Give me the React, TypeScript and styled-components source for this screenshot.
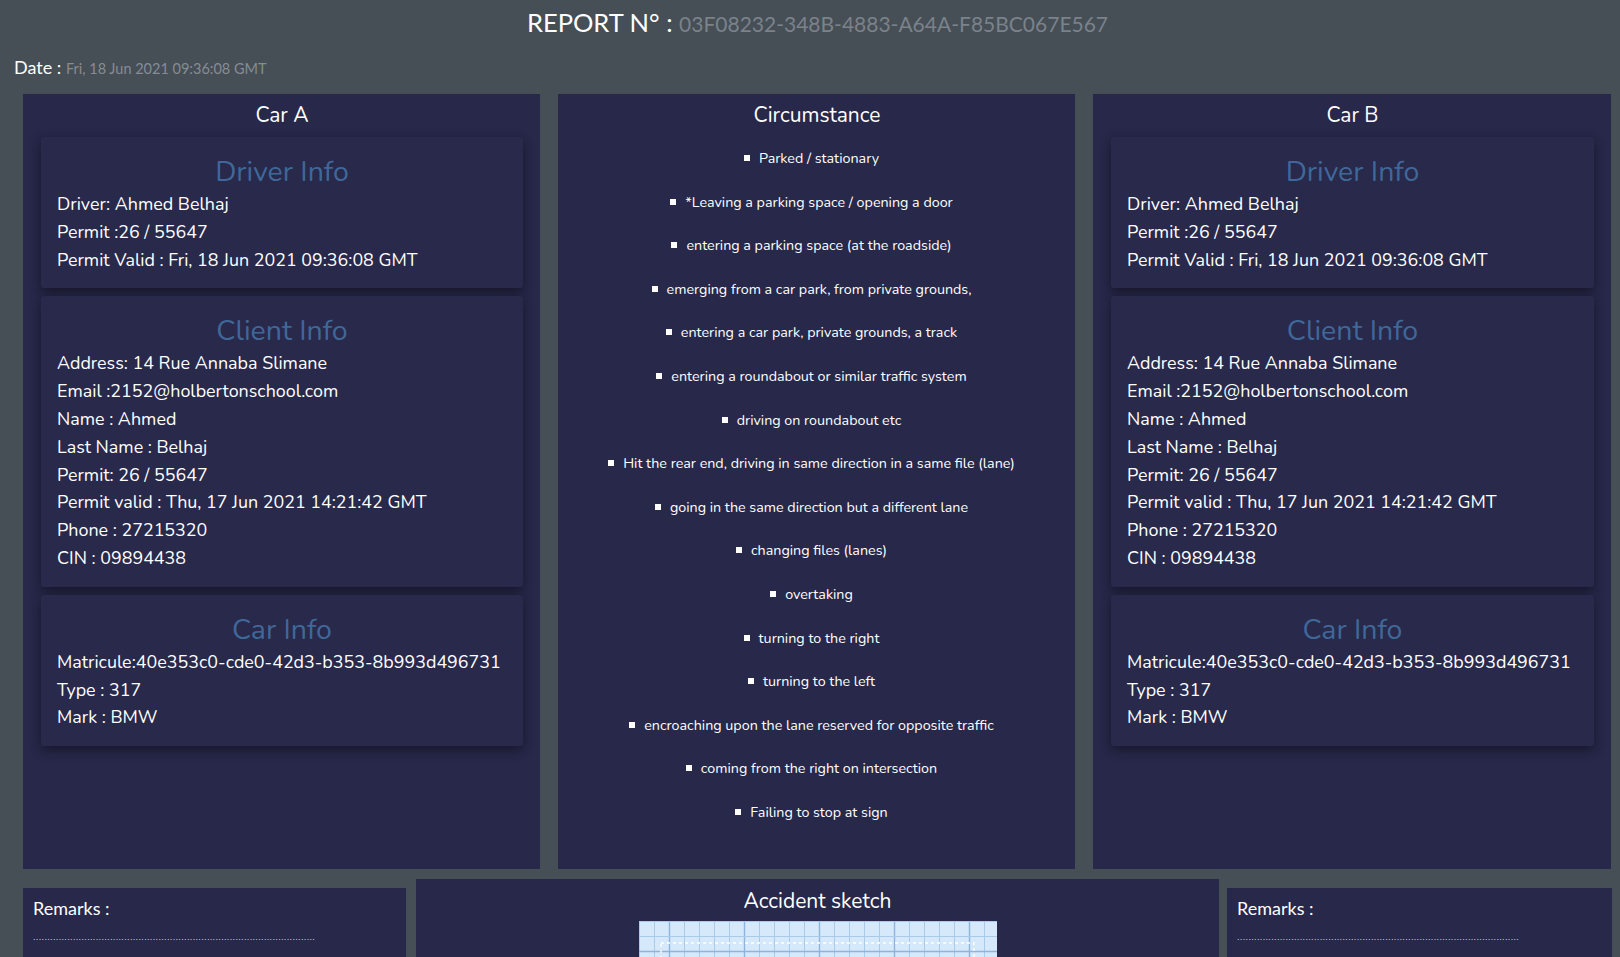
import React from "react";
import styled, { createGlobalStyle } from "styled-components";

const GlobalStyle = createGlobalStyle`
  html, body { margin: 0; padding: 0; }
  body {
    background: #464e56;
    font-family: "Nunito", Lato, "Noto Sans", sans-serif;
    color: #ffffff;
    overflow: hidden;
  }
  * { box-sizing: border-box; }
`;

const Page = styled.div`
  width: 1620px;
  height: 957px;
  overflow: hidden;
`;

const Header = styled.h1`
  margin: 0;
  padding: 5px 0 0 15px;
  height: 44px;
  text-align: center;
  font-family: Lato, "Noto Sans", sans-serif;
  font-weight: 400;
  font-size: 25.5px;
  line-height: 34px;
  color: #ffffff;
`;

const ReportId = styled.span`
  font-size: 21px;
  color: #7b828a;
`;

const DateRow = styled.div`
  padding-left: 14px;
  margin-top: 11px;
  height: 24px;
  font-family: Lato, "Noto Sans", sans-serif;
  font-size: 18px;
  line-height: 24px;
`;

const DateValue = styled.span`
  font-size: 14.5px;
  color: #868c93;
`;

const Columns = styled.div`
  display: grid;
  grid-template-columns: 517px 517px 518px;
  column-gap: 18px;
  padding-left: 23px;
  margin-top: 15px;
`;

const Panel = styled.section`
  background: #27284a;
  height: 775px;
  padding: 8px 17px 0 18px;
`;

const PanelTitle = styled.h2`
  margin: 0 0 9px;
  text-align: center;
  font-weight: 400;
  font-size: 21px;
  line-height: 26px;
`;

const Card = styled.div`
  background: #28294b;
  border-radius: 3px;
  box-shadow: 0 4px 12px rgba(0, 0, 0, 0.45);
  padding: 18px 16px 14px;
  & + & {
    margin-top: 8px;
  }
`;

const CardTitle = styled.h3`
  margin: 0 0 2px;
  text-align: center;
  font-weight: 400;
  font-size: 28.5px;
  line-height: 34px;
  color: #3f6899;
`;

const Line = styled.div`
  font-size: 17.9px;
  line-height: 27.8px;
  white-space: nowrap;
`;

const List = styled.ul`
  list-style: none;
  margin: 6px 0 0;
  padding: 0 11px 0 0;
`;

const Item = styled.li`
  text-align: center;
  font-size: 14.3px;
  line-height: 43.6px;
  white-space: nowrap;
  &::before {
    content: "";
    display: inline-block;
    width: 6px;
    height: 6px;
    background: #ffffff;
    margin-right: 9px;
    vertical-align: 2px;
  }
`;

const BottomRow = styled.div`
  display: flex;
  align-items: flex-start;
  padding-left: 23px;
  margin-top: 10px;
`;

const RemarksBox = styled.div<{ $w: number; $ml: number }>`
  width: ${(p) => p.$w}px;
  margin-left: ${(p) => p.$ml}px;
  margin-top: 9px;
  height: 80px;
  background: #27284a;
  padding: 8px 10px;
`;

const RemarksLabel = styled.div`
  font-family: Lato, "Noto Sans", sans-serif;
  font-size: 18px;
  line-height: 24px;
`;

const Dots = styled.div`
  margin-top: 12px;
  font-family: "Liberation Sans", sans-serif;
  font-size: 9px;
  line-height: 10px;
  letter-spacing: 0.35px;
  color: #d8d8e0;
  white-space: nowrap;
`;

const SketchBox = styled.div`
  width: 803px;
  margin-left: 10px;
  height: 120px;
  background: #27284a;
  display: flex;
  flex-direction: column;
  align-items: center;
  padding-top: 9px;
`;

const SketchTitle = styled.div`
  font-size: 21px;
  line-height: 26px;
  margin-bottom: 7px;
`;

const GridWrap = styled.div`
  width: 358px;
  height: 200px;
  background: #d5e9fb;
`;

const SketchGrid = () => {
  const cell = 15;
  const w = 358;
  const h = 200;
  const v: React.ReactNode[] = [];
  for (let i = 0; i * cell <= w; i++) {
    const major = i % 5 === 2;
    v.push(
      <line key={"v" + i} x1={i * cell + 0.5} y1={0} x2={i * cell + 0.5} y2={h} stroke={major ? "#8db4da" : "#a9cbe9"} strokeWidth={major ? 1.4 : 1} />
    );
  }
  for (let j = 0; j * cell <= h; j++) {
    const major = j % 5 === 2;
    v.push(
      <line key={"h" + j} x1={0} y1={j * cell + 0.5} x2={w} y2={j * cell + 0.5} stroke={major ? "#8db4da" : "#a9cbe9"} strokeWidth={major ? 1.6 : 1} />
    );
  }
  return (
    <svg width={w} height={h} viewBox={`0 0 ${w} ${h}`}>
      <rect x={0} y={0} width={w} height={h} fill="#d5e9fb" />
      {v}
      <rect x={22} y={22} width={313} height={160} fill="none" stroke="#ffffff" strokeWidth={1.3} strokeDasharray="3 3" />
    </svg>
  );
};

const circumstances = [
  "Parked / stationary",
  "*Leaving a parking space / opening a door",
  "entering a parking space (at the roadside)",
  "emerging from a car park, from private grounds,",
  "entering a car park, private grounds, a track",
  "entering a roundabout or similar traffic system",
  "driving on roundabout etc",
  "Hit the rear end, driving in same direction in a same file (lane)",
  "going in the same direction but a different lane",
  "changing files (lanes)",
  "overtaking",
  "turning to the right",
  "turning to the left",
  "encroaching upon the lane reserved for opposite traffic",
  "coming from the right on intersection",
  "Failing to stop at sign",
];

const CarColumn = ({ name }: { name: string }) => (
  <Panel>
    <PanelTitle>{name}</PanelTitle>
    <Card>
      <CardTitle>Driver Info</CardTitle>
      <Line>Driver: Ahmed Belhaj</Line>
      <Line>Permit :26 / 55647</Line>
      <Line>Permit Valid : Fri, 18 Jun 2021 09:36:08 GMT</Line>
    </Card>
    <Card>
      <CardTitle>Client Info</CardTitle>
      <Line>Address: 14 Rue Annaba Slimane</Line>
      <Line>Email :2152@holbertonschool.com</Line>
      <Line>Name : Ahmed</Line>
      <Line>Last Name : Belhaj</Line>
      <Line>Permit: 26 / 55647</Line>
      <Line>Permit valid : Thu, 17 Jun 2021 14:21:42 GMT</Line>
      <Line>Phone : 27215320</Line>
      <Line>CIN : 09894438</Line>
    </Card>
    <Card>
      <CardTitle>Car Info</CardTitle>
      <Line>Matricule:40e353c0-cde0-42d3-b353-8b993d496731</Line>
      <Line>Type : 317</Line>
      <Line>Mark : BMW</Line>
    </Card>
  </Panel>
);

const dots = ".".repeat(99);

export default function App() {
  return (
    <Page>
      <GlobalStyle />
      <Header>
        REPORT N° : <ReportId>03F08232-348B-4883-A64A-F85BC067E567</ReportId>
      </Header>
      <DateRow>
        Date : <DateValue>Fri, 18 Jun 2021 09:36:08 GMT</DateValue>
      </DateRow>
      <Columns>
        <CarColumn name="Car A" />
        <Panel>
          <PanelTitle>Circumstance</PanelTitle>
          <List>
            {circumstances.map((c) => (
              <Item key={c}>{c}</Item>
            ))}
          </List>
        </Panel>
        <CarColumn name="Car B" />
      </Columns>
      <BottomRow>
        <RemarksBox $w={383} $ml={0}>
          <RemarksLabel>Remarks :</RemarksLabel>
          <Dots>{dots}</Dots>
        </RemarksBox>
        <SketchBox>
          <SketchTitle>Accident sketch</SketchTitle>
          <GridWrap>
            <SketchGrid />
          </GridWrap>
        </SketchBox>
        <RemarksBox $w={385} $ml={8}>
          <RemarksLabel>Remarks :</RemarksLabel>
          <Dots>{dots}</Dots>
        </RemarksBox>
      </BottomRow>
    </Page>
  );
}
